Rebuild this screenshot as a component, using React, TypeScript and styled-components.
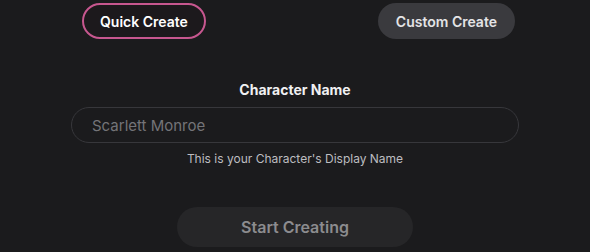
import React from 'react';
import styled, { createGlobalStyle } from 'styled-components';

const Global = createGlobalStyle`
    html, body {
        margin: 0;
        padding: 0;
        background: #1b1b1d;
    }
    body {
        font-family: Inter, "Noto Sans", sans-serif;
        color: #f2f2f2;
    }
`;

const Page = styled.div`
    width: 590px;
    height: 252px;
    overflow: hidden;
    display: flex;
    flex-direction: column;
`;

const ModeBar = styled.div`
    display: flex;
    justify-content: space-between;
    padding: 3px 75px 0 82px;
`;

const ModeButton = styled.button<{ $active?: boolean }>`
    height: 36px;
    padding: 0 ${p => (p.$active ? '16px' : '18px')};
    border-radius: 999px;
    font-family: inherit;
    font-size: 14px;
    font-weight: 600;
    border: ${p => (p.$active ? '2px solid #c7578f' : '0')};
    background: ${p => (p.$active ? '#1c191c' : '#3a3a3e')};
    color: ${p => (p.$active ? '#ffffff' : '#e4e4e6')};
    cursor: pointer;
`;

const Form = styled.div`
    display: flex;
    flex-direction: column;
    align-items: center;
    padding-top: 42px;
`;

const Label = styled.div`
    font-size: 14px;
    font-weight: 700;
    color: #f0f0f2;
    line-height: 17px;
`;

const NameInput = styled.input`
    box-sizing: border-box;
    width: 448px;
    height: 36px;
    margin-top: 9px;
    padding: 0 20px;
    border-radius: 999px;
    border: 1px solid #37373b;
    background: #1b1b1d;
    font-family: inherit;
    font-size: 15px;
    color: #e8e8e8;
    outline: none;
    &::placeholder {
        color: #747478;
    }
`;

const Hint = styled.div`
    margin-top: 8px;
    font-size: 12px;
    color: #bdbdc0;
    line-height: 15px;
`;

const StartButton = styled.button`
    margin-top: 41px;
    width: 236px;
    height: 40px;
    border: 0;
    border-radius: 999px;
    background: #262628;
    color: #8c8c8f;
    font-family: inherit;
    font-size: 16px;
    font-weight: 600;
`;

export default function App() {
    return (
        <Page>
            <Global />
            <ModeBar>
                <ModeButton $active>Quick Create</ModeButton>
                <ModeButton>Custom Create</ModeButton>
            </ModeBar>
            <Form>
                <Label>Character Name</Label>
                <NameInput placeholder="Scarlett Monroe" />
                <Hint>This is your Character's Display Name</Hint>
                <StartButton>Start Creating</StartButton>
            </Form>
        </Page>
    );
}
